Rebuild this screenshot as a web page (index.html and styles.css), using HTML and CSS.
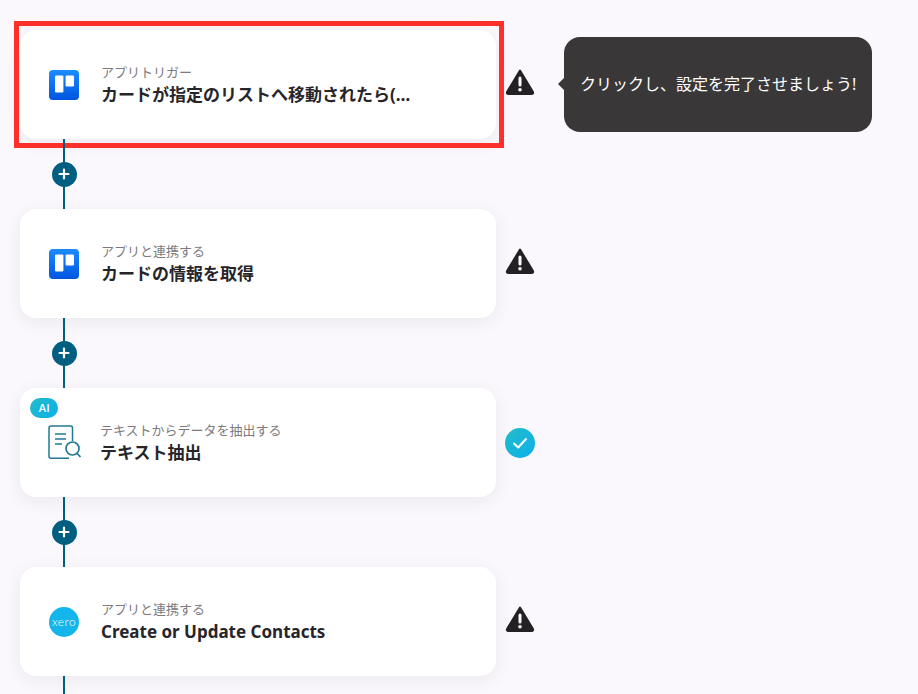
FILE: index.html
```html
<!DOCTYPE html>
<html lang="ja">
<head>
<meta charset="UTF-8">
<meta name="viewport" content="width=device-width, initial-scale=1.0">
<title>フローボット</title>
<link rel="stylesheet" href="styles.css">
</head>
<body>
  <div class="flow">

    <div class="step">
      <div class="card">
        <div class="highlight"></div>
        <svg class="app-icon" viewBox="0 0 30 30">
          <rect width="30" height="30" rx="4" fill="url(#trelloA)"/>
          <defs>
            <linearGradient id="trelloA" x1="0" y1="0" x2="0" y2="1">
              <stop offset="0" stop-color="#1a8cff"/>
              <stop offset="1" stop-color="#0055e0"/>
            </linearGradient>
          </defs>
          <rect x="6" y="5.5" width="8.4" height="17" rx="1.2" fill="#fff"/>
          <rect x="16.6" y="5.5" width="8.4" height="11" rx="1.2" fill="#fff"/>
        </svg>
        <div class="card-text">
          <p class="card-sub">アプリトリガー</p>
          <p class="card-title">カードが指定のリストへ移動されたら(…</p>
        </div>
      </div>
      <svg class="status status-warn" viewBox="0 0 30 28">
        <path d="M15 2.5 L28 24 Q28.6 26 26.6 26 L3.4 26 Q1.4 26 2 24 Z" fill="#232124" stroke="#232124" stroke-width="2" stroke-linejoin="round"/>
        <rect x="13.5" y="8.5" width="3" height="10" rx="1.5" fill="#fff"/>
        <circle cx="15" cy="21.8" r="1.8" fill="#fff"/>
      </svg>
      <div class="tooltip">クリックし、設定を完了させましょう!</div>
    </div>

    <div class="connector"><span class="add-btn">
      <svg viewBox="0 0 12 12"><path d="M6 1.5v9M1.5 6h9" stroke="#fff" stroke-width="2.2" stroke-linecap="round"/></svg>
    </span></div>

    <div class="step">
      <div class="card">
        <svg class="app-icon" viewBox="0 0 30 30">
          <rect width="30" height="30" rx="4" fill="url(#trelloB)"/>
          <defs>
            <linearGradient id="trelloB" x1="0" y1="0" x2="0" y2="1">
              <stop offset="0" stop-color="#1a8cff"/>
              <stop offset="1" stop-color="#0055e0"/>
            </linearGradient>
          </defs>
          <rect x="6" y="5.5" width="8.4" height="17" rx="1.2" fill="#fff"/>
          <rect x="16.6" y="5.5" width="8.4" height="11" rx="1.2" fill="#fff"/>
        </svg>
        <div class="card-text">
          <p class="card-sub">アプリと連携する</p>
          <p class="card-title">カードの情報を取得</p>
        </div>
      </div>
      <svg class="status status-warn" viewBox="0 0 30 28">
        <path d="M15 2.5 L28 24 Q28.6 26 26.6 26 L3.4 26 Q1.4 26 2 24 Z" fill="#232124" stroke="#232124" stroke-width="2" stroke-linejoin="round"/>
        <rect x="13.5" y="8.5" width="3" height="10" rx="1.5" fill="#fff"/>
        <circle cx="15" cy="21.8" r="1.8" fill="#fff"/>
      </svg>
    </div>

    <div class="connector"><span class="add-btn">
      <svg viewBox="0 0 12 12"><path d="M6 1.5v9M1.5 6h9" stroke="#fff" stroke-width="2.2" stroke-linecap="round"/></svg>
    </span></div>

    <div class="step">
      <div class="card">
        <span class="ai-badge">AI</span>
        <svg class="app-icon doc-icon" viewBox="0 0 33 35" fill="none" stroke="#1f7896" stroke-width="1.5">
          <path d="M21 33.200H3a2 2 0 0 1-2-2V3a2 2 0 0 1 2-2h19.500a2 2 0 0 1 2 2v13"/>
          <path d="M7 9h11M7 14h11M7 19h7" stroke-width="1.300"/>
          <circle cx="24.500" cy="23.500" r="6.500" stroke-width="1.700"/>
          <path d="M29.200 28.500L32.500 32" stroke-width="1.700"/>
        </svg>
        <div class="card-text">
          <p class="card-sub">テキストからデータを抽出する</p>
          <p class="card-title">テキスト抽出</p>
        </div>
      </div>
      <svg class="status status-done" viewBox="0 0 30 30">
        <defs>
          <linearGradient id="doneFill" x1="0" y1="0" x2="1" y2="1">
            <stop offset="0" stop-color="#22bcc9"/>
            <stop offset="1" stop-color="#0cb0ea"/>
          </linearGradient>
        </defs>
        <circle cx="15" cy="15" r="15" fill="url(#doneFill)"/>
        <path d="M9 15.500l4.200 4L21 11" fill="none" stroke="#fff" stroke-width="2" stroke-linecap="round" stroke-linejoin="round"/>
      </svg>
    </div>

    <div class="connector"><span class="add-btn">
      <svg viewBox="0 0 12 12"><path d="M6 1.5v9M1.5 6h9" stroke="#fff" stroke-width="2.2" stroke-linecap="round"/></svg>
    </span></div>

    <div class="step">
      <div class="card">
        <span class="app-icon xero-logo">xero</span>
        <div class="card-text">
          <p class="card-sub">アプリと連携する</p>
          <p class="card-title">Create or Update Contacts</p>
        </div>
      </div>
      <svg class="status status-warn" viewBox="0 0 30 28">
        <path d="M15 2.5 L28 24 Q28.6 26 26.6 26 L3.4 26 Q1.4 26 2 24 Z" fill="#232124" stroke="#232124" stroke-width="2" stroke-linejoin="round"/>
        <rect x="13.5" y="8.5" width="3" height="10" rx="1.5" fill="#fff"/>
        <circle cx="15" cy="21.8" r="1.8" fill="#fff"/>
      </svg>
    </div>

    <div class="connector connector-end"></div>

  </div>
</body>
</html>
```

FILE: styles.css
```css
html, body {
  height: 694px;
  overflow: hidden;
}

body {
  margin: 0;
  background-color: #faf8fc;
  color: #27252a;
  font-family: "Noto Sans", "Noto Sans CJK JP", sans-serif;
}

.flow {
  padding: 30px 0 0 20px;
}

.step {
  display: flex;
  align-items: center;
}

.card {
  position: relative;
  display: flex;
  align-items: center;
  gap: 22px;
  box-sizing: border-box;
  width: 476px;
  height: 109px;
  padding-left: 29px;
  background-color: #fff;
  border-radius: 16px;
  box-shadow: 0 4px 18px rgba(40, 30, 60, 0.07);
}

/* red box around the first card */
.highlight {
  position: absolute;
  top: -9px;
  right: -8px;
  bottom: -9px;
  left: -6px;
  border: 5px solid #ff3029;
  pointer-events: none;
}

.app-icon {
  flex: none;
  display: block;
  width: 30px;
  height: 30px;
}

.doc-icon {
  width: 33px;
  height: 35px;
  margin: 0 -3px 0 -1px;
}

.card-text {
  min-width: 0;
}

.card-sub {
  margin: 0 0 1px;
  font-size: 13px;
  line-height: 18px;
  color: #7c7a7e;
}

.card-title {
  margin: 0;
  font-size: 17px;
  font-weight: 700;
  line-height: 25px;
  color: #27252a;
}

.status {
  display: block;
  flex: none;
  width: 30px;
  height: 28px;
  margin-left: 9px;
}

.status-warn {
  margin-bottom: 5px;
}

.status-done {
  height: 30px;
}

.tooltip {
  position: relative;
  box-sizing: border-box;
  display: flex;
  align-items: center;
  width: 308px;
  height: 95px;
  margin-left: 29px;
  padding: 0 0 3px 16px;
  background-color: #3a3739;
  border-radius: 16px;
  color: #fff;
  font-size: 16px;
}

.tooltip::before {
  content: "";
  position: absolute;
  top: 41px;
  left: -6px;
  border-top: 6px solid transparent;
  border-bottom: 6px solid transparent;
  border-right: 6px solid #3a3739;
}

.connector {
  position: relative;
  display: flex;
  align-items: center;
  justify-content: center;
  width: 2px;
  height: 70px;
  margin-left: 43px;
  background-color: #005f80;
}

.connector-end {
  height: 18px;
}

.add-btn {
  flex: none;
  display: flex;
  align-items: center;
  justify-content: center;
  width: 25px;
  height: 25px;
  border-radius: 50%;
  background-color: #005f80;
}

.add-btn svg {
  width: 12px;
  height: 12px;
}

.ai-badge {
  position: absolute;
  top: 10px;
  left: 10px;
  width: 28px;
  height: 20px;
  border-radius: 10px;
  background: linear-gradient(135deg, #22bcc9, #0cb0ea);
  color: #fff;
  font-family: "Inter", sans-serif;
  font-size: 11px;
  font-weight: 500;
  line-height: 20px;
  text-align: center;
}

.xero-logo {
  border-radius: 50%;
  background-color: #13b5ea;
  color: #fff;
  font-family: "Lato", sans-serif;
  font-size: 12px;
  font-weight: 300;
  letter-spacing: 0.5px;
  line-height: 30px;
  text-align: center;
}
```
